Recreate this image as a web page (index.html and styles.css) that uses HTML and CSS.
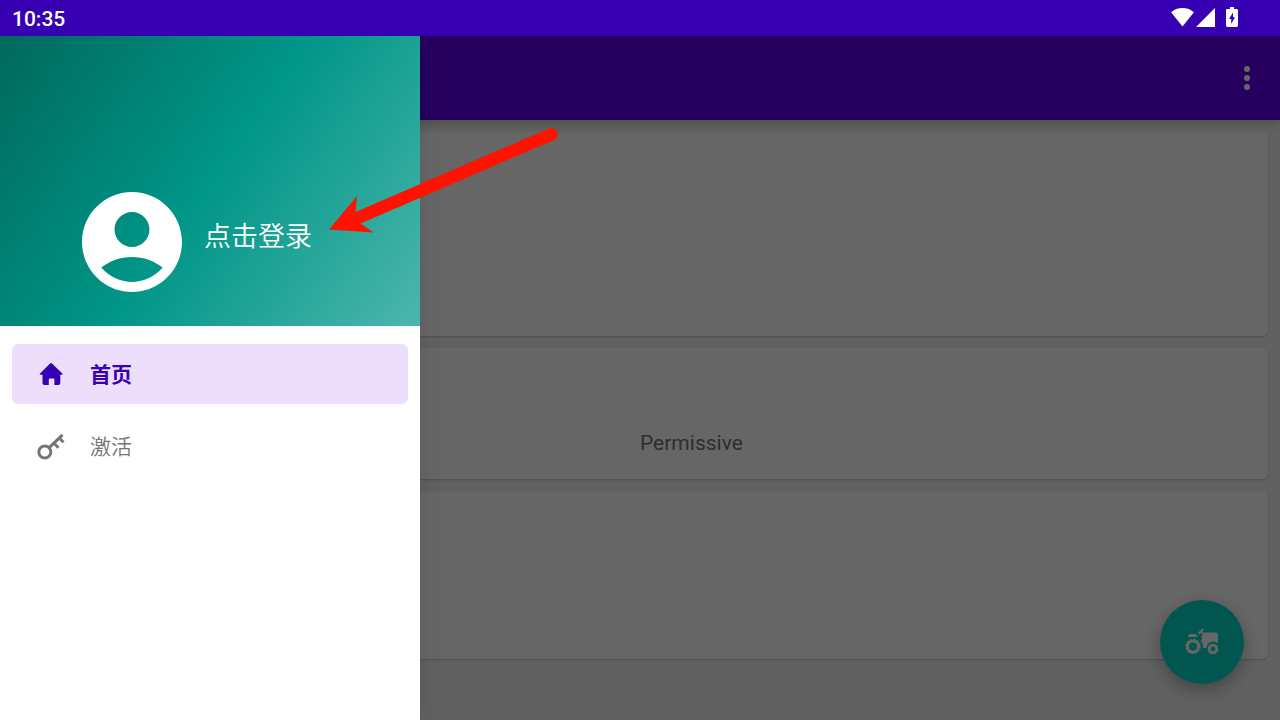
FILE: index.html
```html
<!DOCTYPE html>
<html lang="zh-CN">
<head>
  <meta charset="UTF-8" />
  <meta name="viewport" content="width=device-width, initial-scale=1.0"/>
  <title>首页</title>
  <link rel="stylesheet" href="styles.css">
</head>
<body>
  <div class="status-bar">
    <span class="time">10:35</span>
    <div class="status-icons">
      <svg class="wifi" viewBox="0 0 24 20"><path d="M0 4.500C3.200 1.500 7.400 0 12 0s8.800 1.500 12 4.500L12 19.500z"/></svg>
      <svg class="signal" viewBox="0 0 20 20"><path d="M20 0v20H0z"/></svg>
      <svg class="battery" viewBox="0 0 12 20"><path fill-rule="evenodd" d="M4 0h4v2h2.600Q12 2 12 3.400v15.200Q12 20 10.600 20H1.400Q0 20 0 18.600V3.400Q0 2 1.400 2H4zM7 5.500L3 12h2.200v5L9 10.300H7z"/></svg>
    </div>
  </div>

  <div class="screen">
    <header class="app-bar">
      <button class="more" aria-label="More options">
        <svg viewBox="0 0 36 36"><circle cx="18" cy="9" r="3"/><circle cx="18" cy="18" r="3"/><circle cx="18" cy="27" r="3"/></svg>
      </button>
    </header>

    <main class="cards">
      <section class="card card-status"></section>
      <section class="card card-selinux"><p>Permissive</p></section>
      <section class="card card-device"></section>
    </main>

    <button class="fab" aria-label="Start">
      <svg viewBox="0 0 36 28">
        <path d="M5.500 6h6.500l2 3H4.500q-1-.2-.6-1.200zM19.500 4.500h12q2.500 0 2.500 2.500v8.500A6.800 6.800 0 0 0 22.500 20H19v-3.500q-.5-2-2.500-3.500l1.500-1.500V10h-1z"/>
        <path class="line" d="M19 6l-2-2.500M14.500 5.500l5-4.500"/>
        <circle class="wheel" cx="9" cy="18.500" r="5.500"/>
        <circle class="tread" cx="9" cy="18.500" r="6.700"/>
        <circle class="wheel front" cx="29" cy="21" r="3.800"/>
      </svg>
    </button>

    <div class="scrim"></div>

    <aside class="drawer">
      <div class="drawer-header">
        <svg class="avatar" viewBox="2 2 20 20"><path d="M12 2C6.480 2 2 6.480 2 12s4.480 10 10 10 10-4.480 10-10S17.520 2 12 2zm0 4c1.930 0 3.500 1.570 3.500 3.500S13.930 13 12 13s-3.500-1.570-3.500-3.500S10.070 6 12 6zm0 14c-2.030 0-4.430-.82-6.140-2.880C7.550 15.800 9.680 15 12 15s4.450.8 6.140 2.120C16.430 19.180 14.030 20 12 20z"/></svg>
        <a class="login" href="#">点击登录</a>
      </div>
      <nav>
        <a class="item active" href="#">
          <svg viewBox="0 0 30 30"><path d="M14 4.400q1-1 2 0l10.400 10.100q.9 1-.4 1.300h-1.700V24q0 2-2 2h-3.900v-5.500q0-1-1-1h-3.600q-1 0-1 1V26H8.500q-2 0-2-2v-8.200H4.400q-1.300-.3-.4-1.300z"/></svg>
          <span>首页</span>
        </a>
        <a class="item" href="#">
          <svg class="key" viewBox="0 0 30 30"><circle cx="8.800" cy="21" r="6"/><path d="M13.200 16.600L26.500 3.800M18 12.200l4.500 4.500M23.200 7l4.300 4.300"/></svg>
          <span>激活</span>
        </a>
      </nav>
    </aside>
  </div>

  <svg class="pointer" viewBox="0 0 230 108"><path d="M0 102.500L28 69l-1.500 16L220 1.500a6.200 6.200 0 0 1 5 11.400L31.500 96.500 44.500 105.500z"/></svg>
</body>
</html>
```
FILE: styles.css
```css
* { box-sizing: border-box; margin: 0; padding: 0; }
body {
  display: flex;
  flex-direction: column;
  min-height: 100vh;
  font-family: Roboto, "Noto Sans CJK SC", sans-serif;
  background: #f2f2f2;
}
svg { display: block; }
button { border: none; cursor: pointer; }
a { text-decoration: none; }

/* Status bar */
.status-bar {
  position: relative;
  z-index: 1;
  display: flex;
  align-items: center;
  justify-content: space-between;
  height: 36px;
  padding: 0 42px 0 12px;
  background: #3700b3;
  color: #fff;
}
.time { padding-top: 2px; font-size: 21px; font-weight: 500; line-height: 24px; }
.status-icons { display: flex; align-items: center; gap: 2px; padding-bottom: 2px; fill: #fff; }
.wifi { width: 23px; height: 19px; }
.signal { width: 19px; height: 19px; }
.battery { width: 12px; height: 20px; margin-left: 9px; }

/* Page under the drawer */
.screen { position: relative; flex: 1; }
.app-bar {
  display: flex;
  align-items: center;
  justify-content: flex-end;
  height: 84px;
  padding-right: 15px;
  background: #6200ee;
  box-shadow: 0 3px 10px rgba(0,0,0,0.2);
}
.more { width: 36px; height: 36px; background: none; fill: #fff; }

.cards { display: flex; flex-direction: column; gap: 12px; padding: 12px; }
.card {
  background: #fff;
  border-radius: 6px;
  box-shadow: 0 1px 2px rgba(0,0,0,0.2);
}
.card-status { min-height: 204px; }
.card-selinux {
  display: grid;
  grid-template-columns: 1fr 1fr;
  align-items: end;
  min-height: 131px;
  padding-bottom: 24px;
}
.card-selinux p { grid-column: 2; color: #757575; font-size: 21px; line-height: 24px; }
.card-device { min-height: 168px; }

.fab {
  position: absolute;
  right: 36px;
  bottom: 36px;
  display: grid;
  place-items: center;
  width: 84px;
  height: 84px;
  border-radius: 50%;
  background: #03dac5;
  box-shadow: 0 6px 18px rgba(0,0,0,0.3);
}
.fab svg { width: 36px; height: 28px; fill: #fff; }
.fab .line { fill: none; stroke: #fff; stroke-width: 2; }
.fab .wheel { fill: none; stroke: #fff; stroke-width: 3; }
.fab .tread { fill: none; stroke: #fff; stroke-width: 2; stroke-dasharray: 2.2 1.3; }

.scrim { position: absolute; inset: 0; background: rgba(0,0,0,0.6); }

/* Drawer */
.drawer {
  position: absolute;
  top: 0;
  bottom: 0;
  left: 0;
  width: 420px;
  max-width: 85%;
  background: #fff;
  box-shadow: 0 0 24px rgba(0,0,0,0.1);
}
.drawer-header {
  display: flex;
  align-items: center;
  gap: 22px;
  height: 290px;
  padding: 122px 24px 0 82px;
  background: linear-gradient(125deg, #00695c, #009688 50%, #4db6ac);
}
.avatar { width: 100px; height: 100px; fill: #fff; }
.login { padding-bottom: 10px; color: #fff; font-size: 27px; font-weight: 350; line-height: 40px; }

nav { display: flex; flex-direction: column; gap: 12px; padding: 18px 12px; }
.item {
  display: flex;
  align-items: center;
  gap: 24px;
  height: 60px;
  padding: 0 24px;
  border-radius: 6px;
  color: #757575;
  font-size: 21px;
  font-weight: 350;
}
.item span { padding-bottom: 2px; }
.item svg { width: 30px; height: 30px; fill: currentColor; }
.item .key { fill: none; stroke: currentColor; stroke-width: 3; }
.item.active { background: #eddffc; color: #3700b3; font-weight: 700; }

/* Red arrow pointing at the login link */
.pointer {
  position: absolute;
  z-index: 1;
  top: 127px;
  left: 329px;
  width: 230px;
  height: 108px;
  fill: #ff1200;
}
```
